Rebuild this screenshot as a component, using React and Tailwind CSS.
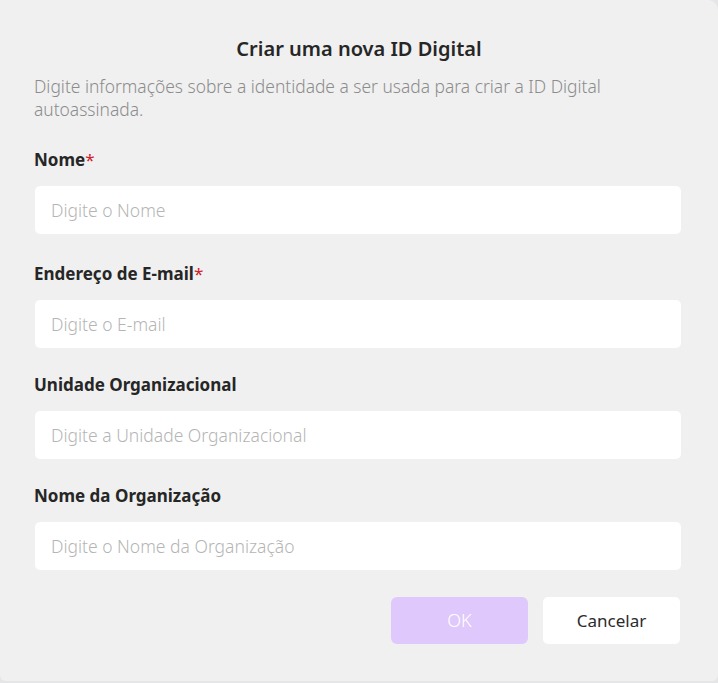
import React from "react";

const fields = [
  { label: "Nome", required: true, placeholder: "Digite o Nome" },
  { label: "Endereço de E-mail", required: true, placeholder: "Digite o E-mail" },
  { label: "Unidade Organizacional", required: false, placeholder: "Digite a Unidade Organizacional" },
  { label: "Nome da Organização", required: false, placeholder: "Digite o Nome da Organização" },
];

const App = () => {
  return (
    <div
      className="w-[718px] h-[683px] bg-[#e4e6e8]"
      style={{ fontFamily: '"Noto Sans", "Open Sans", sans-serif' }}
    >
      <div className="h-[681px] bg-[#f0f0f0] rounded-b-[6px] rounded-tr-[10px] pl-[35px] pr-[37px] pt-[35px]">
        <h1 className="text-center text-[20px] font-semibold leading-[28px] text-[#262626] pl-[2px]">
          Criar uma nova ID Digital
        </h1>
        <p className="mt-[12px] text-[17.4px] leading-[23px] text-[#8c8c8c] font-light -ml-[1px] pr-[60px]">
          Digite informações sobre a identidade a ser usada para criar a ID Digital autoassinada.
        </p>
        <div className="mt-[27px] flex flex-col gap-[25px]">
          {fields.map((f, i) => (
            <div key={f.label} className={"flex flex-col " + (i === 1 ? "mt-[3px]" : "")}>
              <label className="-ml-[1px] text-[17px] font-bold leading-[24px] text-[#262626]">
                {f.label}
                {f.required && <span className="text-[#d0202c] font-normal">*</span>}
              </label>
              <input
                className="mt-[14px] h-[48px] w-full rounded-[5px] bg-white px-[16px] text-[17.5px] font-light text-[#262626] placeholder:text-[#b5b5b5] outline-none"
                placeholder={f.placeholder}
              />
            </div>
          ))}
        </div>
        <div className="mt-[27px] flex justify-end gap-[15px] pr-[1px]">
          <button className="h-[47px] w-[137px] rounded-[6px] bg-[#dfc8fb] text-[18px] font-light text-white">
            OK
          </button>
          <button className="h-[47px] w-[137px] rounded-[5px] bg-white text-[17px] text-[#2b2b2b]">
            Cancelar
          </button>
        </div>
      </div>
    </div>
  );
};

export default App;
